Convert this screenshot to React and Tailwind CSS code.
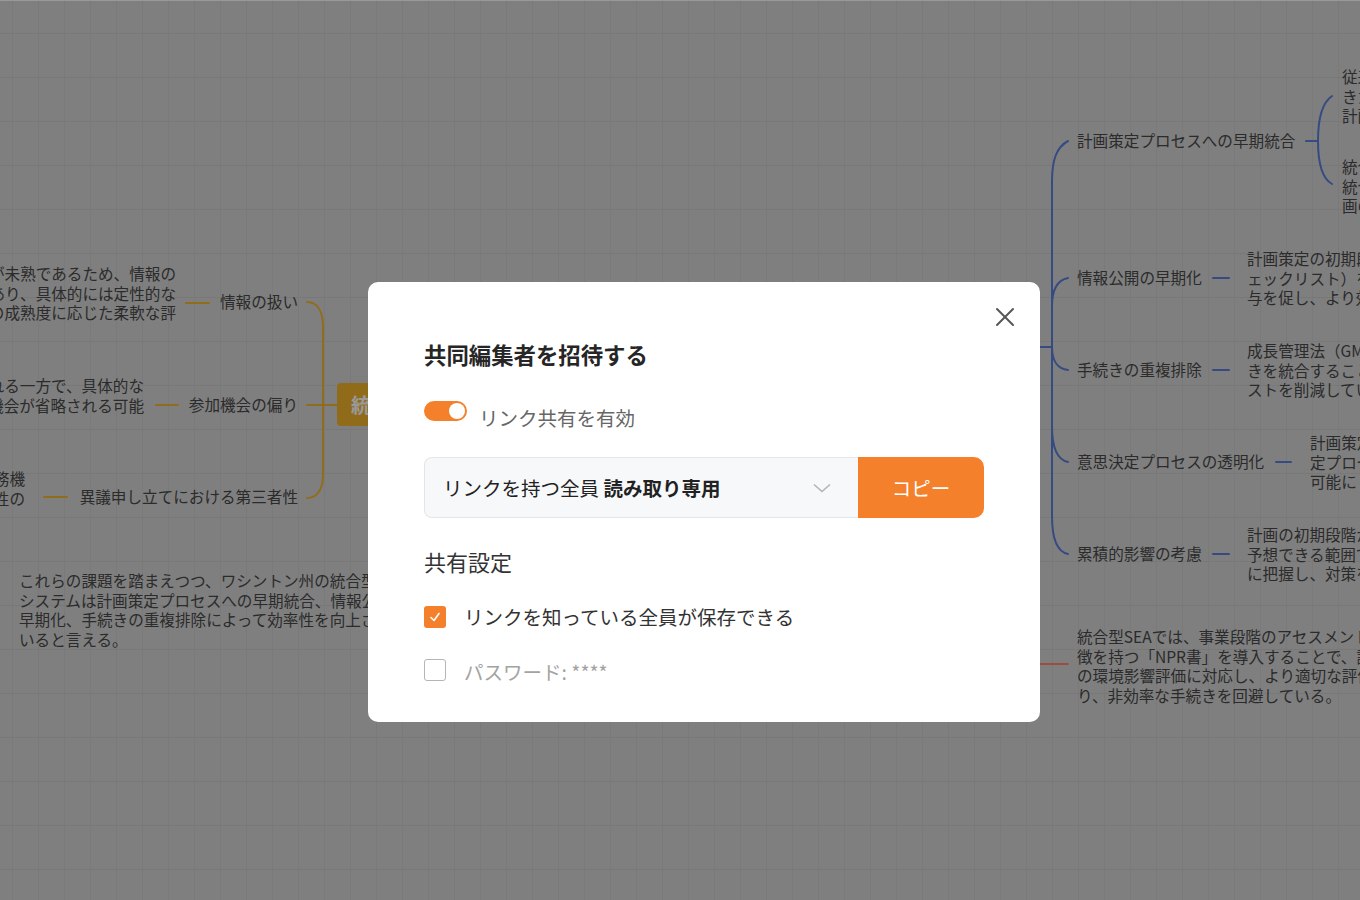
import { X } from 'lucide-react';

const GOLD = '#f2b52f';
const BLUE = '#5b7dd8';

function MindMap() {
  return (
    <div className="relative h-[900px] w-full overflow-hidden border-t border-white bg-[#d4d4d4] bg-[linear-gradient(to_right,#cbcbcb_1px,transparent_1px),linear-gradient(to_bottom,#c9c9c9_1px,transparent_1px)] bg-size-[26px_44px] bg-position-[12px_32px] text-[15.6px] leading-[19.5px] text-[#484848]">
      {/* connectors */}
      <svg className="absolute inset-0 h-full w-full" fill="none" strokeWidth="2" strokeLinecap="round">
        <g stroke={GOLD}>
          <path d="M186 302 H209" />
          <path d="M156 404 H178" />
          <path d="M44 496 H67" />
          <path d="M307 301 C316 301 323 308 323 326 L323 474 C323 490 316 497 307 497" />
          <path d="M307 404 H337" />
        </g>
        <g stroke={BLUE}>
          <path d="M1020 346 H1052" />
          <path d="M1052 346 L1052 180 C1052 158 1057 146 1068 140" />
          <path d="M1052 346 L1052 305 C1052 288 1058 279 1068 277" />
          <path d="M1052 346 C1052 360 1058 368 1068 369" />
          <path d="M1052 346 L1052 425 C1052 447 1058 459 1068 461" />
          <path d="M1052 346 L1052 515 C1052 539 1058 551 1068 553" />
          <path d="M1213 277 H1229" />
          <path d="M1213 369 H1229" />
          <path d="M1276 461 H1291" />
          <path d="M1213 553 H1229" />
          <path d="M1306 140 H1318" />
          <path d="M1332 95 C1323 101 1318 116 1318 140 C1318 164 1323 178 1332 183" />
        </g>
        <path d="M1020 663 H1068" stroke="#ff8070" />
      </svg>

      {/* left branch */}
      <div className="absolute right-[1184px] top-[263px] whitespace-nowrap text-right">
        <div>計画段階では情報が未熟であるため、情報の</div>
        <div>取り扱いに課題があり、具体的には定性的な</div>
        <div>評価が中心となり、計画の成熟度に応じた柔軟な評</div>
      </div>
      <div className="absolute right-[1062px] top-[291px] whitespace-nowrap">情報の扱い</div>

      <div className="absolute right-[1216px] top-[375px] whitespace-nowrap text-right">
        <div>手続きが簡略化される一方で、具体的な</div>
        <div>事業に対する参加機会が省略される可能</div>
      </div>
      <div className="absolute right-[1062px] top-[394px] whitespace-nowrap">参加機会の偏り</div>

      <div className="absolute right-[1335px] top-[468px] whitespace-nowrap text-right">
        <div>計画策定を担う事務機</div>
        <div>関が審査を行うため中立性の</div>
      </div>
      <div className="absolute right-[1062px] top-[486px] whitespace-nowrap">異議申し立てにおける第三者性</div>

      <div className="absolute left-[337px] top-[382px] flex h-[43px] items-center rounded-[4px] bg-[#f0b22c] px-[14px] text-[20px] font-bold whitespace-nowrap text-white">
        統合型SEAの課題
      </div>

      <div className="absolute left-[19px] top-[570px] w-[420px]">
        <div>これらの課題を踏まえつつ、ワシントン州の統合型</div>
        <div>システムは計画策定プロセスへの早期統合、情報公開の</div>
        <div>早期化、手続きの重複排除によって効率性を向上させて</div>
        <div>いると言える。</div>
      </div>

      {/* right branch */}
      <div className="absolute left-[1077px] top-[130px] whitespace-nowrap">計画策定プロセスへの早期統合</div>
      <div className="absolute left-[1342px] top-[66px] whitespace-nowrap">
        <div>従来は計画の後に行われて</div>
        <div>きた環境評価を、</div>
        <div>計画策定と同時に行う。</div>
      </div>
      <div className="absolute left-[1342px] top-[156px] whitespace-nowrap">
        <div>統合型SEAにより、</div>
        <div>統合的な判断が可能となり、計</div>
        <div>画の質が向上する。</div>
      </div>

      <div className="absolute left-[1077px] top-[267px] whitespace-nowrap">情報公開の早期化</div>
      <div className="absolute left-[1247px] top-[248px] whitespace-nowrap">
        <div>計画策定の初期段階で環境チ</div>
        <div>ェックリスト）を公開し、市民の関</div>
        <div>与を促し、より効果的な評価を行う。</div>
      </div>

      <div className="absolute left-[1077px] top-[359px] whitespace-nowrap">手続きの重複排除</div>
      <div className="absolute left-[1247px] top-[340px] whitespace-nowrap">
        <div>成長管理法（GMA）とSEPAの手続</div>
        <div>きを統合することで、重複するコ</div>
        <div>ストを削減している。</div>
      </div>

      <div className="absolute left-[1077px] top-[451px] whitespace-nowrap">意思決定プロセスの透明化</div>
      <div className="absolute left-[1310px] top-[432px] whitespace-nowrap">
        <div>計画策定の段階で意思決</div>
        <div>定プロセスを公開し、検証を</div>
        <div>可能にしている。</div>
      </div>

      <div className="absolute left-[1077px] top-[543px] whitespace-nowrap">累積的影響の考慮</div>
      <div className="absolute left-[1247px] top-[524px] whitespace-nowrap">
        <div>計画の初期段階から</div>
        <div>予想できる範囲で累積的影響を早期</div>
        <div>に把握し、対策を講じる。</div>
      </div>

      <div className="absolute left-[1077px] top-[626px] whitespace-nowrap">
        <div>統合型SEAでは、事業段階のアセスメントの特</div>
        <div>徴を持つ「NPR書」を導入することで、計画段階</div>
        <div>の環境影響評価に対応し、より適切な評価が可能とな</div>
        <div>り、非効率な手続きを回避している。</div>
      </div>
    </div>
  );
}

function ShareDialog() {
  return (
    <div className="relative w-[672px] rounded-[10px] bg-white px-[56px] pt-[56px] pb-[41px]">
      <button className="absolute right-[19px] top-[19px] text-[#555]">
        <X size={32} strokeWidth={1.5} />
      </button>

      <h2 className="text-[22.4px] font-bold leading-8 text-[#262626]">共同編集者を招待する</h2>

      <div className="mt-[31px] flex items-start">
        <div className="relative h-[20px] w-[43px] rounded-full bg-[#f4802b]">
          <span className="absolute right-[2px] top-[2px] h-4 w-4 rounded-full bg-white" />
        </div>
        <span className="ml-[12px] mt-[7px] text-[19.5px] leading-5 text-[#666]">リンク共有を有効</span>
      </div>

      <div className="mt-[29px] flex h-[61px]">
        <div className="flex flex-1 items-center justify-between rounded-l-[8px] border border-r-0 border-[#e3e5e8] bg-[#f7f8fa] pl-[18px] pr-[27px]">
          <span className="text-[19.5px] text-[#222]">
            リンクを持つ全員 <span className="font-bold">読み取り専用</span>
          </span>
          <svg width="18" height="10" viewBox="0 0 18 10" fill="none" stroke="#b4b4b4" strokeWidth="1.6">
            <polyline points="1,1.5 9,8.5 17,1.5" />
          </svg>
        </div>
        <button className="flex w-[126px] items-center justify-center rounded-r-[10px] bg-[#f4802b] text-[19.5px] text-white">
          コピー
        </button>
      </div>

      <h3 className="mt-[27px] text-[22px] leading-8 text-[#333]">共有設定</h3>

      <label className="mt-[29px] flex h-[22px] items-center">
        <span className="flex h-[22px] w-[22px] items-center justify-center rounded-[3px] bg-[#f4802b]">
          <svg width="14" height="14" viewBox="0 0 14 14" fill="none" stroke="white" strokeWidth="1.6" strokeLinecap="round" strokeLinejoin="round">
            <polyline points="3,7.5 6,10.5 11,3.5" />
          </svg>
        </span>
        <span className="ml-[18px] text-[19.5px] leading-[22px] text-[#333]">リンクを知っている全員が保存できる</span>
      </label>

      <label className="mt-[31px] flex h-[22px] items-center">
        <span className="h-[22px] w-[22px] rounded-[3px] border-[1.5px] border-[#b5b5b5] bg-white" />
        <span className="ml-[18px] mt-[3px] text-[19.5px] leading-[22px] text-[#a3a3a3]">パスワード: ****</span>
      </label>
    </div>
  );
}

export default function App() {
  return (
    <div className="relative h-[900px] w-full overflow-hidden font-['Noto_Sans_CJK_JP','Noto_Sans',sans-serif]">
      <MindMap />
      <div className="fixed inset-0 flex items-start justify-center bg-black/40 pl-[48px] pt-[282px]">
        <ShareDialog />
      </div>
    </div>
  );
}
